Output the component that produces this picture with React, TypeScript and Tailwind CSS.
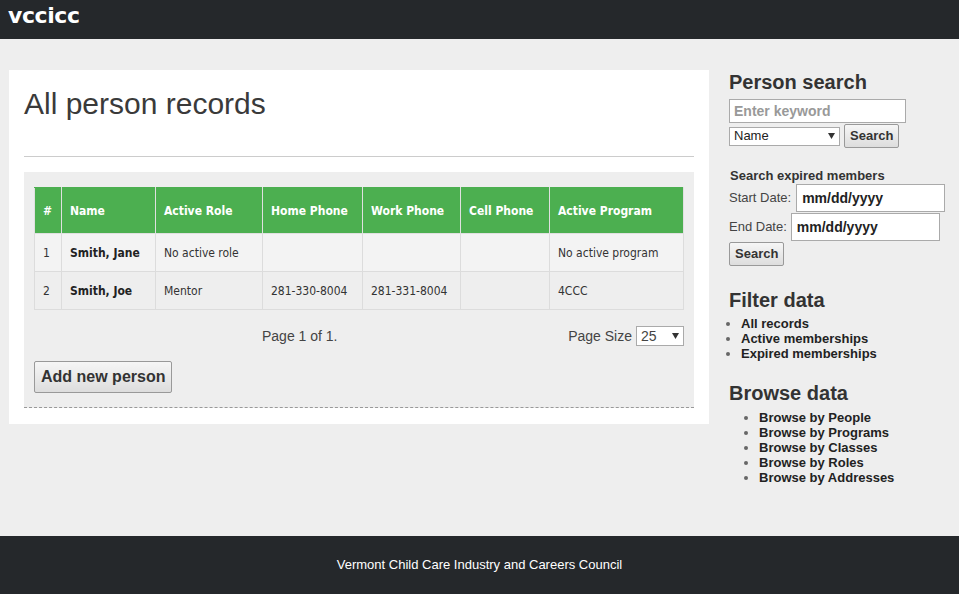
import React from "react";

const rows = [
  { n: "1", name: "Smith, Jane", role: "No active role", home: "", work: "", cell: "", prog: "No active program" },
  { n: "2", name: "Smith, Joe", role: "Mentor", home: "281-330-8004", work: "281-331-8004", cell: "", prog: "4CCC" },
];

const cols = [
  { t: "#", w: "w-[27px]" },
  { t: "Name", w: "w-[94px]" },
  { t: "Active Role", w: "w-[107px]" },
  { t: "Home Phone", w: "w-[100px]" },
  { t: "Work Phone", w: "w-[98px]" },
  { t: "Cell Phone", w: "w-[89px]" },
  { t: "Active Program", w: "" },
];

const Arrow = () => (
  <svg width="7" height="6" viewBox="0 0 7 6" className="shrink-0">
    <path d="M0 0H7L3.5 6Z" fill="#333" />
  </svg>
);

export default function App() {
  const arial = { fontFamily: '"Liberation Sans", Arial, sans-serif' };
  const tfont = { fontFamily: '"DejaVu Sans Condensed", "DejaVu Sans", Tahoma, sans-serif' };
  return (
    <div className="h-[594px] flex flex-col bg-[#eeeeee] text-[#333] overflow-hidden" style={arial}>
      <header className="h-[39px] shrink-0 bg-[#25282b] flex items-center px-[8px]">
        <span className="text-white font-bold text-[22px] leading-none -mt-[8px]" style={{ fontFamily: '"DejaVu Sans", Verdana, sans-serif', letterSpacing: "-0.4px" }}>vccicc</span>
      </header>

      <div className="flex-1 flex items-start pl-[9px] pt-[31px]">
        <main className="w-[700px] bg-white px-[15px] pt-[17px] pb-[16px]">
          <h1 className="text-[30px] leading-[34px] text-[#3a3a3a]">All person records</h1>
          <div className="h-px bg-[#cccccc] mt-[35px]" />
          <div className="mt-[15px] bg-[#eeeeee] border-b border-dashed border-[#999] px-[10px] pt-[15px] pb-[14px]">
            <table className="w-full border-collapse text-[12px]" style={tfont}>
              <thead>
                <tr className="bg-[#4caf50] text-white h-[46px]">
                  {cols.map((c) => (
                    <th key={c.t} className={`${c.w} text-left font-bold px-[8px] border border-[#e0e0e0] border-t-[#4caf50]`} style={{ fontSize: "12px" }}>
                      {c.t}
                    </th>
                  ))}
                </tr>
              </thead>
              <tbody>
                {rows.map((r, i) => (
                  <tr key={r.n} className={`h-[38px] ${i === 0 ? "bg-[#f3f3f3]" : "bg-[#eeeeee]"}`}>
                    <td className="px-[8px] border border-[#dcdcdc]">{r.n}</td>
                    <td className="px-[8px] border border-[#dcdcdc] font-bold text-[#222]">{r.name}</td>
                    <td className="px-[8px] border border-[#dcdcdc]">{r.role}</td>
                    <td className="px-[8px] border border-[#dcdcdc]">{r.home}</td>
                    <td className="px-[8px] border border-[#dcdcdc]">{r.work}</td>
                    <td className="px-[8px] border border-[#dcdcdc]">{r.cell}</td>
                    <td className="px-[8px] border border-[#dcdcdc]">{r.prog}</td>
                  </tr>
                ))}
              </tbody>
            </table>
            <div className="flex items-center justify-between h-[20px] mt-[16px] text-[14px] text-[#444]">
              <div className="ml-[228px]">Page 1 of 1.</div>
              <div className="flex items-center gap-[4px]">
                <span>Page Size</span>
                <div className="w-[48px] h-[20px] border border-[#aaa] bg-white flex items-center justify-between px-[4px]">
                  <span className="text-[14px]">25</span>
                  <Arrow />
                </div>
              </div>
            </div>
            <button className="mt-[15px] h-[32px] px-[6px] border border-[#999] rounded-[2px] bg-gradient-to-b from-[#f6f6f6] to-[#dddddd] text-[16px] font-bold text-[#333]">
              Add new person
            </button>
          </div>
        </main>

        <aside className="ml-[20px] w-[220px] text-[13px]">
          <h2 className="text-[20px] font-bold leading-[24px] text-[#333]">Person search</h2>
          <div className="mt-[5px] w-[177px] h-[24px] border border-[#aaa] bg-white flex items-center px-[4px] text-[14px] text-[#999] font-bold">
            Enter keyword
          </div>
          <div className="flex items-center mt-[1px] gap-[4px]">
            <div className="w-[111px] h-[19px] border border-[#aaa] bg-white flex items-center justify-between px-[4px] text-[13px] text-[#222]">
              <span>Name</span>
              <Arrow />
            </div>
            <button className="h-[24px] px-[5px] border border-[#999] rounded-[2px] bg-gradient-to-b from-[#f6f6f6] to-[#dddddd] font-bold text-[13px] text-[#333]">Search</button>
          </div>

          <div className="mt-[20px] font-bold text-[13px] leading-[16px] pl-[1px]">Search expired members</div>
          <div className="flex items-center">
            <span className="text-[13px] text-[#444]">Start Date:</span>
            <div className="ml-[5px] w-[149px] h-[28px] border border-[#aaa] bg-white flex items-center px-[5px] text-[14px] font-bold text-[#222]">mm/dd/yyyy</div>
          </div>
          <div className="flex items-center mt-[1px]">
            <span className="text-[13px] text-[#444]">End Date:</span>
            <div className="ml-[4px] w-[149px] h-[28px] border border-[#aaa] bg-white flex items-center px-[5px] text-[14px] font-bold text-[#222]">mm/dd/yyyy</div>
          </div>
          <button className="mt-[1px] h-[24px] px-[5px] border border-[#999] rounded-[2px] bg-gradient-to-b from-[#f6f6f6] to-[#dddddd] font-bold text-[13px] text-[#333]">Search</button>

          <h2 className="mt-[22px] text-[20px] font-bold leading-[24px]">Filter data</h2>
          <ul className="mt-[4px] list-disc pl-[12px] text-[13px] font-bold leading-[15px] text-[#222] marker:text-[#666]">
            <li>All records</li>
            <li>Active memberships</li>
            <li>Expired memberships</li>
          </ul>

          <h2 className="mt-[20px] text-[20px] font-bold leading-[24px]">Browse data</h2>
          <ul className="mt-[5px] list-disc pl-[30px] text-[13px] font-bold leading-[15px] text-[#222] marker:text-[#666]">
            <li>Browse by People</li>
            <li>Browse by Programs</li>
            <li>Browse by Classes</li>
            <li>Browse by Roles</li>
            <li>Browse by Addresses</li>
          </ul>
        </aside>
      </div>

      <footer className="h-[58px] shrink-0 bg-[#25282b] flex items-center justify-center text-white text-[13px]">
        Vermont Child Care Industry and Careers Council
      </footer>
    </div>
  );
}
